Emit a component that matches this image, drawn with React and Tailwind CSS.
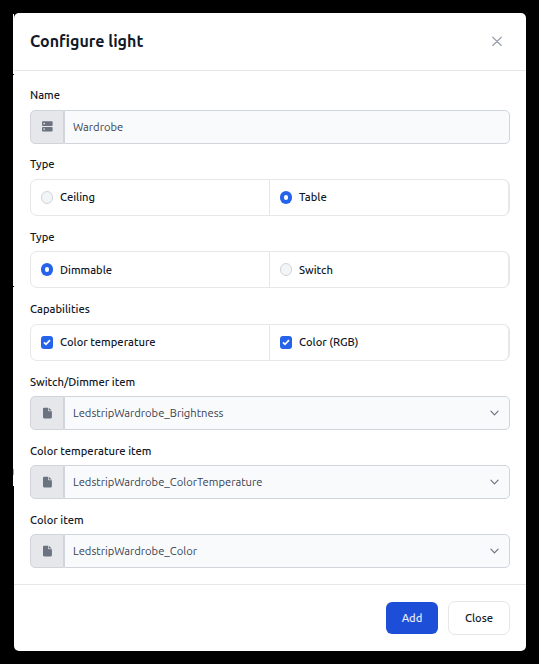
import React from "react";

function ServerIcon() {
  return (
    <svg width="12" height="12" viewBox="0 0 12 12" fill="none">
      <rect x="1" y=".2" width="10.6" height="4.7" rx="1" fill="#6b7280" />
      <rect x="1" y="5.9" width="10.6" height="4.7" rx="1" fill="#6b7280" />
      <rect x="2.4" y="2" width="1.6" height="1.2" fill="#e5e7eb" />
      <rect x="2.4" y="7.5" width="1.6" height="1.2" fill="#e5e7eb" />
    </svg>
  );
}

function FileIcon() {
  return (
    <svg width="12" height="12" viewBox="0 0 12 12" fill="none">
      <path d="M3 .7H7V3.3Q7 4.2 7.9 4.2H10.9V10.3Q10.9 11.4 9.8 11.4H3.1Q2 11.4 2 10.3V1.7Q2 .7 3 .7Z" fill="#6b7280" />
      <path d="M7.7.7 10.7 3.6H8.2Q7.7 3.6 7.7 3.1Z" fill="#6b7280" />
    </svg>
  );
}

function Label({ children, className = "h-[35px] pt-[11px]" }) {
  return (
    <div className={`${className} text-[11.2px] leading-[18px] font-medium text-[#111827]`}>
      <span className="whitespace-nowrap">{children}</span>
    </div>
  );
}

function Field({ icon, value, select }) {
  return (
    <div className="flex h-[34px]">
      <div className="flex w-[34px] items-center justify-center rounded-l-[5px] border border-[#d1d5db] bg-[#e5e7eb]">
        {icon}
      </div>
      <div className="flex flex-1 items-center justify-between rounded-r-[5px] border border-[#d1d5db] bg-[#f9fafb] pr-[10px] pl-2">
        <span className="text-[11.2px] leading-[18px] whitespace-nowrap text-[#374151]">{value}</span>
        {select && (
          <svg width="9" height="6" viewBox="0 0 9 6" fill="none" stroke="#6b7280" strokeWidth="1.2" strokeLinecap="round" strokeLinejoin="round">
            <path d="M.9 1.2 4.5 4.8 8.1 1.2" />
          </svg>
        )}
      </div>
    </div>
  );
}

function Radio({ checked }) {
  return checked ? (
    <span className="flex h-[13px] w-3 items-center justify-center rounded-full bg-[#2563eb]">
      <span className="h-[5px] w-[4.5px] rounded-full bg-white" />
    </span>
  ) : (
    <span className="h-[13px] w-3 rounded-full border border-[#d1d5db] bg-[#f3f4f6]" />
  );
}

function Check() {
  return (
    <span className="flex h-[13px] w-3 items-center justify-center rounded-[3px] bg-[#2563eb]">
      <svg width="8" height="9" viewBox="0 0 8 9" fill="none" stroke="#fff" strokeWidth="1.7">
        <path d="M1 4.4 3 6.3 7 2.1" />
      </svg>
    </span>
  );
}

function Options({ left, right }) {
  return (
    <div className="flex h-[37px] rounded-[7px] border border-[#e5e7eb]">
      <div className="flex w-[239px] items-center gap-[7px] border-r border-[#e5e7eb] pl-[10px]">{left}</div>
      <div className="flex flex-1 items-center gap-[7px] rounded-r-[6px] border-r border-[#e5e7eb] pl-[10px]">{right}</div>
    </div>
  );
}

function OptionText({ children, className = "pb-0.5" }) {
  return (
    <span className={`text-[11.2px] leading-4 font-medium whitespace-nowrap text-[#111827] ${className}`}>{children}</span>
  );
}

export default function App() {
  return (
    <div className="relative h-[664px] w-[539px] bg-black pt-[13px] pl-[14px] font-['Ubuntu','Noto_Sans',sans-serif]">
      <div className="absolute top-[14px] left-[13px] h-[472px] w-px bg-white">
        <div className="absolute top-[60px] h-px w-px bg-black" />
        <div className="absolute top-[272px] h-px w-px bg-black" />
        <div className="absolute top-[455px] h-[6px] w-px bg-[#d8a060]" />
      </div>
      <div className="flex h-[638px] w-[512px] flex-col rounded-[5px] bg-white">
        <header className="flex h-[58px] items-center justify-between border-b border-[#e5e7eb] pr-6 pb-0.5 pl-4">
          <h1 className="text-[16px] leading-6 font-semibold whitespace-nowrap text-[#111827]">Configure light</h1>
          <svg width="10" height="10" viewBox="0 0 10 10" fill="none" stroke="#9ca3af" strokeWidth="1.3" strokeLinecap="round">
            <path d="M.8 1.3 9.2 9.5M9.2 1.3.8 9.5" />
          </svg>
        </header>
        <main className="px-4">
          <Label className="h-[39px] pt-[15px]">Name</Label>
          <Field icon={<ServerIcon />} value="Wardrobe" />
          <Label>Type</Label>
          <Options
            left={<><Radio /><OptionText>Ceiling</OptionText></>}
            right={<><Radio checked /><OptionText>Table</OptionText></>}
          />
          <Label className="h-[35px] pt-3">Type</Label>
          <Options
            left={<><Radio checked /><OptionText className="">Dimmable</OptionText></>}
            right={<><Radio /><OptionText className="">Switch</OptionText></>}
          />
          <Label className="h-[36px] pt-3">Capabilities</Label>
          <Options
            left={<><Check /><OptionText>Color temperature</OptionText></>}
            right={<><Check /><OptionText>Color (RGB)</OptionText></>}
          />
          <Label className="h-[35px] pt-3">Switch/Dimmer item</Label>
          <Field icon={<FileIcon />} value="LedstripWardrobe_Brightness" select />
          <Label className="h-[35px] pt-3">Color temperature item</Label>
          <Field icon={<FileIcon />} value="LedstripWardrobe_ColorTemperature" select />
          <Label className="h-[35px] pt-3">Color item</Label>
          <Field icon={<FileIcon />} value="LedstripWardrobe_Color" select />
        </main>
        <footer className="mt-4 flex flex-1 items-center justify-end gap-[10px] border-t border-[#e5e7eb] pr-4">
          <button className="h-8 w-[52px] rounded-[6px] bg-[#1d4ed8] text-[11.2px] font-medium text-white/90">Add</button>
          <button className="h-[34px] w-[62px] rounded-[7px] border border-[#e5e7eb] bg-white text-[11.2px] font-medium text-[#111827]">Close</button>
        </footer>
      </div>
    </div>
  );
}
